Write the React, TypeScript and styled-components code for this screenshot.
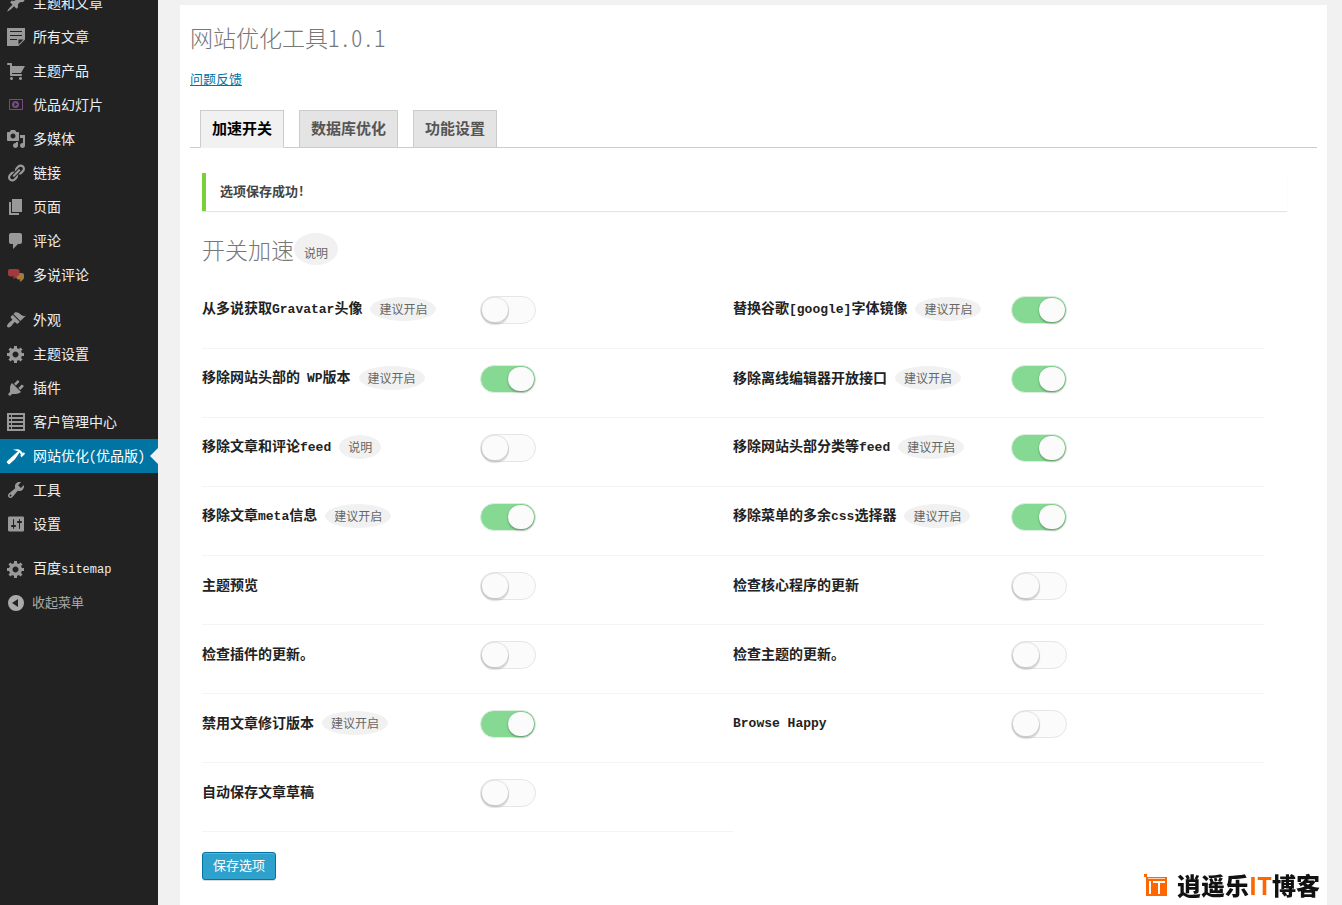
import React from 'react';
import styled, { createGlobalStyle } from 'styled-components';

const GlobalStyle = createGlobalStyle`
  *, *::before, *::after { box-sizing: border-box; }
  body {
    margin: 0;
    background: #f1f1f1;
    color: #444;
    font-family: "Noto Sans CJK SC", sans-serif;
    font-feature-settings: "hwid" 1;
    font-size: 13px;
    line-height: 20px;
  }
  button, input { font: inherit; font-feature-settings: inherit; }
`;

const Layout = styled.div`
  display: grid;
  grid-template-columns: 158px minmax(0, 1fr);
  height: 100vh;
  overflow: hidden;
`;

const Sidebar = styled.nav`
  background: #222;
  overflow: hidden;
`;

const Menu = styled.ul`
  list-style: none;
  margin: -14px 0 0;
  padding: 0;
`;

const MenuItem = styled.li<{ $separated?: boolean }>`
  margin-top: ${(p) => (p.$separated ? 11 : 0)}px;
`;

const MenuLink = styled.a<{ $current?: boolean }>`
  position: relative;
  display: flex;
  align-items: center;
  gap: 7px;
  height: 34px;
  padding-left: 6px;
  font-size: 14px;
  white-space: nowrap;
  text-decoration: none;
  color: ${(p) => (p.$current ? '#fff' : '#eee')};
  background: ${(p) => (p.$current ? '#0074a2' : 'transparent')};

  svg { flex: none; color: ${(p) => (p.$current ? '#fff' : '#999')}; }

  &::after {
    content: ${(p) => (p.$current ? '""' : 'none')};
    position: absolute;
    right: 0;
    top: 9px;
    border: 8px solid transparent;
    border-left-width: 0;
    border-right-color: #f1f1f1;
  }
`;

const MenuText = styled.span`
  padding-bottom: 2px;
`;

const CollapseButton = styled.button`
  display: flex;
  align-items: center;
  gap: 6px;
  width: 100%;
  height: 34px;
  padding: 0 0 0 6px;
  border: 0;
  background: none;
  color: #aaa;
  font-size: 13px;
`;

const Latin = styled.span<{ $size: number }>`
  font-family: "Liberation Mono", monospace;
  font-size: ${(p) => p.$size}px;
`;

const Main = styled.main`
  display: flex;
  min-width: 0;
  padding: 5px 15px 0 22px;
`;

const Panel = styled.section`
  flex: 1;
  min-width: 0;
  padding: 18px 10px;
  background: #fff;
`;

const PageTitle = styled.h1`
  margin: 0;
  color: #777;
  font-size: 23px;
  font-weight: 300;
  line-height: 29px;
`;

const FeedbackLink = styled.a`
  display: inline-block;
  margin-top: 17px;
  color: #0074a2;
`;

const Tabs = styled.div`
  display: flex;
  gap: 15px;
  margin-top: 21px;
  padding-left: 10px;
  border-bottom: 1px solid #ccc;
`;

const Tab = styled.button<{ $active?: boolean }>`
  height: 38px;
  margin-bottom: -1px;
  padding: 0 11px 2px;
  border: 1px solid #ccc;
  border-bottom-color: ${(p) => (p.$active ? '#f1f1f1' : '#ccc')};
  background: ${(p) => (p.$active ? '#f1f1f1' : '#e4e4e4')};
  color: ${(p) => (p.$active ? '#000' : '#555')};
  font-size: 15px;
  font-weight: 700;
`;

const Form = styled.form`
  padding: 25px 30px 0 12px;
`;

const Notice = styled.div`
  height: 38px;
  padding: 8px 14px;
  border-left: 4px solid #7ad03a;
  background: #fff;
  box-shadow: 0 1px 1px rgba(0, 0, 0, 0.1);
  font-weight: 700;
`;

const SectionTitle = styled.h2`
  display: flex;
  align-items: center;
  margin: 22px 0 15px;
  color: #777;
  font-size: 23px;
  font-weight: 300;
  line-height: 32px;
`;

const Badge = styled.span<{ $large?: boolean }>`
  padding: ${(p) => (p.$large ? '10px 10px 2px' : '2px 9px')};
  border-radius: 50%;
  background: #f1f1f1;
  color: #666;
  font-size: 12px;
  font-weight: 400;
  line-height: 20px;
  white-space: nowrap;
`;

const Options = styled.div`
  display: grid;
  grid-template-columns: repeat(2, minmax(0, 1fr));
  padding-right: 23px;
`;

const Option = styled.div`
  display: grid;
  grid-template-columns: 278px 56px;
  align-items: start;
  height: 69px;
  padding-top: 16px;
  border-bottom: 1px solid #f4f4f4;
`;

const OptionName = styled.div`
  display: flex;
  align-items: center;
  gap: 8px;
  height: 26px;
`;

const OptionLabel = styled.label`
  padding-bottom: 2px;
  color: #222;
  font-size: 14px;
  font-weight: 700;
  line-height: 24px;
  white-space: nowrap;
`;

const Toggle = styled.input`
  appearance: none;
  display: block;
  width: 56px;
  height: 28px;
  margin: 0;
  padding: 1px;
  border: 1px solid #e6e6e6;
  border-radius: 14px;
  background: #fbfbfb;

  &::before {
    content: '';
    display: block;
    width: 26px;
    height: 24px;
    border-radius: 13px;
    background: #fbfbfb;
    box-shadow: 0 0 1px 1px rgba(0, 0, 0, 0.09), 0 2px 1px 1px rgba(0, 0, 0, 0.12);
  }

  &:checked {
    border-color: #dcefdf;
    background: #86d993;
  }

  &:checked::before {
    margin-left: 26px;
    box-shadow: 0 0 2px rgba(0, 0, 0, 0.2), 0 2px 2px rgba(0, 0, 0, 0.2);
  }
`;

const SaveButton = styled.button`
  height: 28px;
  margin-top: 20px;
  padding: 0 10px 3px;
  border: 1px solid #0074a2;
  border-radius: 3px;
  background: #2ea2cc;
  box-shadow: inset 0 1px 0 rgba(120, 200, 230, 0.5), 0 1px 0 rgba(0, 0, 0, 0.15);
  color: #fff;
`;

const Watermark = styled.div`
  position: fixed;
  right: 22px;
  bottom: 8px;
  display: flex;
  align-items: center;
  gap: 9px;
  color: #111;
  font-size: 24px;
  font-weight: 900;
  line-height: 24px;
  font-feature-settings: normal;

  span { color: #f60; font-weight: 700; }
`;

const icons = {
  pin: 'M10.44 3.02l1.82-1.82 6.36 6.35-1.83 1.82c-1.05-.68-2.48-.57-3.41.36l-.75.75c-.92.93-1.04 2.35-.35 3.41l-1.83 1.82-2.41-2.41-2.8 2.79c-.42.42-3.38 2.71-3.8 2.29s1.86-3.39 2.28-3.81l2.79-2.79L4.1 9.36l1.83-1.82c1.05.69 2.48.57 3.4-.36l.75-.75c.93-.92 1.05-2.35.36-3.41z',
  note: 'M1 1h18v11.500L12.500 19H1zM4 4v1h12V4zm0 4v1h12V8zm0 4v1h7v-1zm8.500 5.500l5-5h-5z',
  cart: 'M6 13h9c.55 0 1 .45 1 1s-.45 1-1 1H5c-.55 0-1-.45-1-1V4H2c-.55 0-1-.45-1-1s.45-1 1-1h3c.55 0 1 .45 1 1v2h13l-4 7H6v1zm-.5 3c.83 0 1.5.67 1.5 1.5S6.33 19 5.5 19 4 18.33 4 17.5 4.67 16 5.5 16zm9 0c.83 0 1.5.67 1.5 1.5s-.67 1.5-1.5 1.5-1.5-.67-1.5-1.5.67-1.5 1.5-1.5z',
  media: 'M13 11V4c0-.55-.45-1-1-1h-1.67L9 1H5L3.67 3H2c-.55 0-1 .45-1 1v7c0 .55.45 1 1 1h10c.55 0 1-.45 1-1zM7 4.5c1.38 0 2.5 1.12 2.5 2.5S8.38 9.5 7 9.5 4.5 8.38 4.5 7 5.62 4.5 7 4.5zM14 6h5v10.5c0 1.38-1.12 2.5-2.5 2.5S14 17.88 14 16.5s1.12-2.5 2.5-2.5c.17 0 .34.02.5.05V9h-3V6zm-4 8.05V13h2v3.5c0 1.38-1.12 2.5-2.5 2.5S7 17.88 7 16.5 8.12 14 9.5 14c.17 0 .34.02.5.05z',
  link: 'M17.74 2.76c1.68 1.69 1.68 4.41 0 6.1l-1.53 1.52c-1.12 1.12-2.7 1.47-4.14 1.09l2.62-2.61.76-.77.76-.76c.84-.84.84-2.2 0-3.04-.84-.85-2.2-.85-3.04 0l-.77.76-3.38 3.38c-.37-1.44-.02-3.02 1.1-4.14l1.52-1.53c1.69-1.68 4.42-1.68 6.1 0zM8.59 13.43l5.34-5.34c.42-.42.42-1.1 0-1.52-.44-.43-1.13-.39-1.53 0l-5.33 5.34c-.42.42-.42 1.1 0 1.52.44.43 1.13.39 1.52 0zm-.76 2.29l4.14-4.15c.38 1.44.03 3.02-1.09 4.14l-1.52 1.53c-1.69 1.68-4.41 1.68-6.1 0-1.68-1.68-1.68-4.42 0-6.1l1.53-1.52c1.12-1.12 2.7-1.47 4.14-1.1l-4.14 4.15c-.85.84-.85 2.2 0 3.05.84.84 2.2.84 3.04 0z',
  page: 'M6 15V2h10v13H6zm-1 1h8v2H3V5h2v11z',
  comment: 'M5 2h9c1.1 0 2 .9 2 2v7c0 1.1-.9 2-2 2h-2l-5 5v-5H5c-1.1 0-2-.9-2-2V4c0-1.1.9-2 2-2z',
  brush: 'M14.48 11.06L7.41 3.99l1.5-1.5c.5-.56 2.3-.47 3.51.32 1.21.8 1.43 1.28 2.91 2.1 1.18.64 2.45 1.26 4.45.85zm-.71.71L6.7 4.7 4.93 6.47c-.39.39-.39 1.02 0 1.41l1.06 1.06c.39.39.39 1.03 0 1.42-.6.6-1.43 1.11-2.21 1.69-.35.26-.7.53-1.01.84C1.43 14.23.4 16.08 1.4 17.07c.99 1 2.84-.03 4.18-1.36.31-.31.58-.66.85-1.02.57-.78 1.08-1.61 1.69-2.21.39-.39 1.02-.39 1.41 0l1.06 1.06c.39.39 1.02.39 1.41 0z',
  gear: 'M18 12h-2.18c-.17.7-.44 1.35-.81 1.93l1.54 1.54-2.1 2.1-1.54-1.54c-.58.36-1.23.63-1.91.79V19H8v-2.18c-.68-.16-1.33-.43-1.91-.79l-1.54 1.54-2.12-2.12 1.54-1.54c-.36-.58-.63-1.23-.79-1.91H1V9.03h2.17c.16-.7.44-1.35.8-1.94L2.43 5.55l2.1-2.1 1.54 1.54c.58-.37 1.24-.64 1.93-.81V2h3v2.18c.68.16 1.33.43 1.91.79l1.54-1.54 2.12 2.12-1.54 1.54c.36.59.64 1.24.8 1.94H18V12zm-8.5 1.5c1.66 0 3-1.34 3-3s-1.34-3-3-3-3 1.34-3 3 1.34 3 3 3z',
  plug: 'M13.11 4.36L9.87 7.6 8 5.73l3.24-3.24c.35-.34 1.05-.2 1.56.32.52.51.66 1.21.31 1.55zm-8 1.77l.91-1.12 9.01 9.01-1.19.84c-.71.71-2.63 1.16-3.82 1.16H6.14L4.9 17.26c-.59.59-1.54.59-2.12 0-.59-.58-.59-1.53 0-2.12l1.24-1.24v-3.88c0-1.13.4-3.19 1.09-3.89zm7.26 3.97l3.24-3.24c.34-.35 1.04-.21 1.55.31.52.51.66 1.21.31 1.55l-3.24 3.25z',
  list: 'M1 1h18v18H1zM3 3v2h2V3zm3 0v2h11V3zM3 7v2h2V7zm3 0v2h11V7zm-3 4v2h2v-2zm3 0v2h11v-2zm-3 4v2h2v-2zm3 0v2h11v-2z',
  hammer: 'M17.7 6.32l1.41 1.42-3.47 3.41-1.42-1.42.84-.82c-.32-.76-.81-1.57-1.51-2.31l-4.61 6.59-5.26 4.7c-.39.39-1.02.39-1.42 0l-1.2-1.2c-.39-.39-.39-1.02 0-1.41l10.97-9.92c-1.37-.86-3.21-1.46-5.67-1.48 2.7-.82 4.95-.93 6.58-.3 1.7.66 2.82 2.2 3.91 3.58z',
  wrench: 'M16.68 9.77c-1.34 1.34-3.3 1.67-4.95.99l-5.41 6.52c-.99.99-2.59.99-3.58 0s-.99-2.59 0-3.57l6.52-5.42c-.68-1.65-.35-3.61.99-4.95 1.28-1.28 3.12-1.62 4.72-1.06l-2.89 2.89 2.82 2.82 2.86-2.87c.53 1.58.18 3.39-1.08 4.65zM3.81 16.21c.4.39 1.04.39 1.43 0 .4-.4.4-1.04 0-1.43-.39-.4-1.03-.4-1.43 0-.39.39-.39 1.03 0 1.43z',
  sliders: 'M18 16V4c0-1.100-.5-1.500-1.500-1.500h-13C2.500 2.500 2 3 2 4v12c0 .9.500 1.500 1.500 1.500h13c1 0 1.500-.5 1.500-1.500zM8 11h1c.55 0 1 .45 1 1s-.45 1-1 1H8v1.500c0 .28-.22.5-.5.5s-.5-.22-.5-.5V13H6c-.55 0-1-.45-1-1s.45-1 1-1h1V5.500c0-.28.22-.5.5-.5s.5.22.5.5V11zm5-2h-1c-.55 0-1-.45-1-1s.45-1 1-1h1V5.500c0-.28.22-.5.5-.5s.5.22.5.5V7h1c.55 0 1 .45 1 1s-.45 1-1 1h-1v5.500c0 .28-.22.5-.5.5s-.5-.22-.5-.5V9z',
  collapse: 'M10 2a8 8 0 100 16 8 8 0 000-16zm2 4v8l-6-4z',
};

type IconName = keyof typeof icons | 'slides' | 'bubbles';

function Icon({ name }: { name: IconName }) {
  if (name === 'slides') {
    return (
      <svg width="20" height="20" viewBox="0 0 20 20" aria-hidden="true">
        <path d="M3.5 4.500h13v10h-13z" fill="none" stroke="#7a4a86" />
        <circle cx="9.500" cy="9.500" r="3.500" fill="#7a4a86" />
        <path d="M8.500 7.500v4l3-2z" fill="#222" />
      </svg>
    );
  }
  if (name === 'bubbles') {
    return (
      <svg width="20" height="20" viewBox="0 0 20 20" aria-hidden="true">
        <path d="M11 8h5q2 0 2 2v2q0 2-1 2.500l-2 2h-1.500l1-2H12q-2-1-2-3z" fill="#a57a3c" />
        <path d="M4 4h7q2.500 0 2.500 2v2.500q0 2-2 2.500L9 13.500H7L8 11.500H5Q2 11.500 2 9V6q0-2 2-2z" fill="#a03a3c" />
      </svg>
    );
  }
  return (
    <svg width="20" height="20" viewBox="0 0 20 20" fill="currentColor" aria-hidden="true">
      <path fillRule="evenodd" d={icons[name]} />
    </svg>
  );
}

// Sets Latin runs in a monospaced face beside the Chinese text.
function MixedText({ text, size }: { text: string; size: number }) {
  return (
    <>
      {text.split(/([A-Za-z[\]]+(?: [A-Za-z]+)*)/).map((part, i) =>
        i % 2 ? <Latin key={i} $size={size}>{part}</Latin> : part,
      )}
    </>
  );
}

const menu: { icon: IconName; text: string; separated?: boolean; current?: boolean }[] = [
  { icon: 'pin', text: '主题和文章' },
  { icon: 'note', text: '所有文章' },
  { icon: 'cart', text: '主题产品' },
  { icon: 'slides', text: '优品幻灯片' },
  { icon: 'media', text: '多媒体' },
  { icon: 'link', text: '链接' },
  { icon: 'page', text: '页面' },
  { icon: 'comment', text: '评论' },
  { icon: 'bubbles', text: '多说评论' },
  { icon: 'brush', text: '外观', separated: true },
  { icon: 'gear', text: '主题设置' },
  { icon: 'plug', text: '插件' },
  { icon: 'list', text: '客户管理中心' },
  { icon: 'hammer', text: '网站优化(优品版)', current: true },
  { icon: 'wrench', text: '工具' },
  { icon: 'sliders', text: '设置' },
  { icon: 'gear', text: '百度sitemap', separated: true },
];

const options: { label: string; badge?: string; on?: boolean }[] = [
  { label: '从多说获取Gravatar头像', badge: '建议开启' },
  { label: '替换谷歌[google]字体镜像', badge: '建议开启', on: true },
  { label: '移除网站头部的 WP版本', badge: '建议开启', on: true },
  { label: '移除离线编辑器开放接口', badge: '建议开启', on: true },
  { label: '移除文章和评论feed', badge: '说明' },
  { label: '移除网站头部分类等feed', badge: '建议开启', on: true },
  { label: '移除文章meta信息', badge: '建议开启', on: true },
  { label: '移除菜单的多余css选择器', badge: '建议开启', on: true },
  { label: '主题预览' },
  { label: '检查核心程序的更新' },
  { label: '检查插件的更新。' },
  { label: '检查主题的更新。' },
  { label: '禁用文章修订版本', badge: '建议开启', on: true },
  { label: 'Browse Happy' },
  { label: '自动保存文章草稿' },
];

export default function App() {
  return (
    <>
      <GlobalStyle />
      <Layout lang="zh-CN">
        <Sidebar>
          <Menu>
            {menu.map((m) => (
              <MenuItem key={m.text} $separated={m.separated}>
                <MenuLink href="#" $current={m.current}>
                  <Icon name={m.icon} />
                  <MenuText><MixedText text={m.text} size={12} /></MenuText>
                </MenuLink>
              </MenuItem>
            ))}
            <MenuItem>
              <CollapseButton type="button">
                <Icon name="collapse" />
                <MenuText>收起菜单</MenuText>
              </CollapseButton>
            </MenuItem>
          </Menu>
        </Sidebar>
        <Main>
          <Panel>
            <PageTitle>网站优化工具1.0.1</PageTitle>
            <FeedbackLink href="#">问题反馈</FeedbackLink>
            <Tabs role="tablist">
              <Tab type="button" role="tab" aria-selected $active>加速开关</Tab>
              <Tab type="button" role="tab">数据库优化</Tab>
              <Tab type="button" role="tab">功能设置</Tab>
            </Tabs>
            <Form onSubmit={(e) => e.preventDefault()}>
              <Notice role="status">选项保存成功!</Notice>
              <SectionTitle>
                开关加速
                <Badge $large>说明</Badge>
              </SectionTitle>
              <Options>
                {options.map((o, i) => (
                  <Option key={o.label}>
                    <OptionName>
                      <OptionLabel htmlFor={`option-${i}`}>
                        <MixedText text={o.label} size={13} />
                      </OptionLabel>
                      {o.badge && <Badge>{o.badge}</Badge>}
                    </OptionName>
                    <Toggle type="checkbox" id={`option-${i}`} defaultChecked={o.on} />
                  </Option>
                ))}
              </Options>
              <SaveButton type="submit">保存选项</SaveButton>
            </Form>
          </Panel>
        </Main>
      </Layout>
      <Watermark>
        <svg width="24" height="24" viewBox="0 0 24 24" aria-hidden="true">
          <path d="M0 1h3v3H0zM2 4h21v19H2z" fill="#f60" />
          <path d="M4 5.500h17" stroke="#ffd0ae" />
          <path d="M6 8v13M9 9h12M15 9v12" fill="none" stroke="#fff" strokeWidth="2" />
        </svg>
        <div>逍遥乐<span>IT</span>博客</div>
      </Watermark>
    </>
  );
}
